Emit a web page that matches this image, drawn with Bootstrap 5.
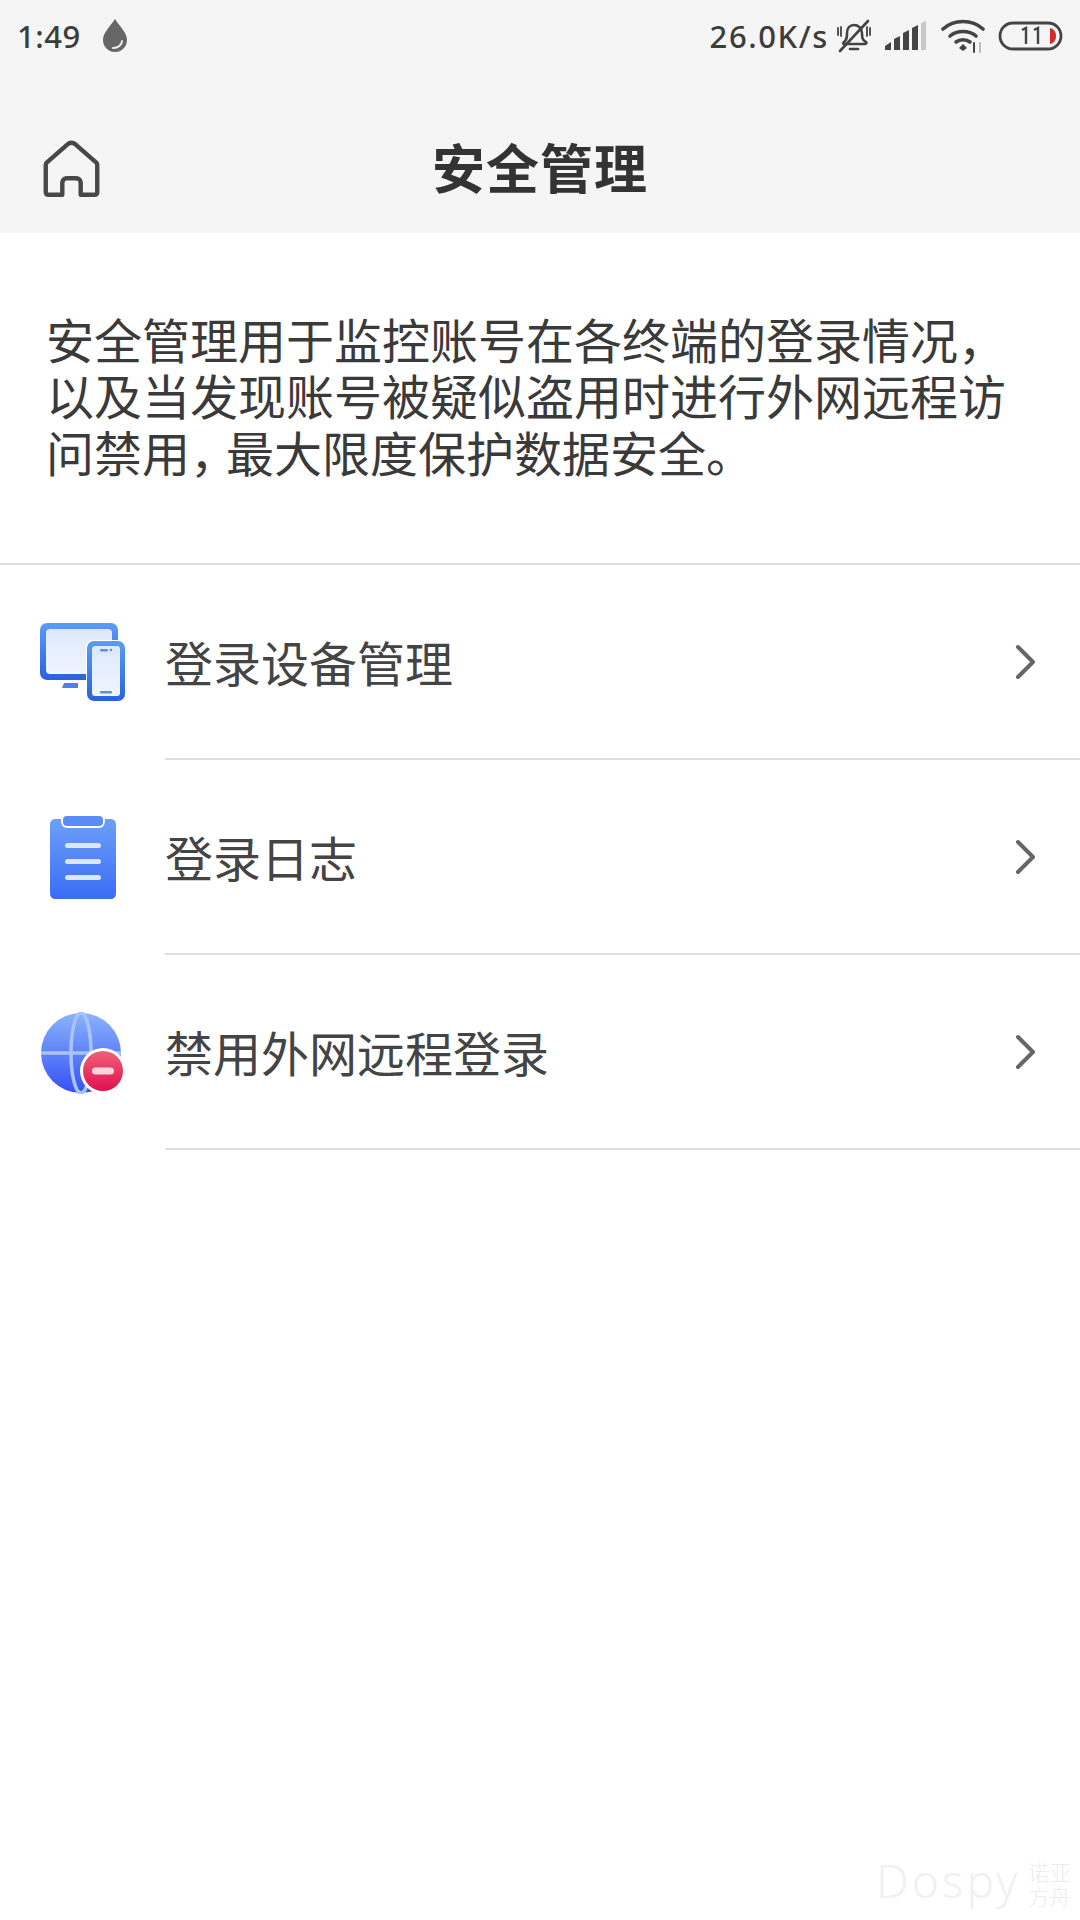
<!DOCTYPE html>
<html lang="zh">
<head>
<meta charset="utf-8">
<title>安全管理</title>
<link href="https://cdn.jsdelivr.net/npm/bootstrap@5.3.0/dist/css/bootstrap.min.css" rel="stylesheet">
<style>
html,body{width:1080px;height:1920px;margin:0;background:#fff;overflow:hidden}
body{font-family:"Noto Sans CJK SC","Noto Sans",sans-serif;color:#333}
.screen{position:relative;width:1080px;height:1920px}
.top-area{background:#f5f5f5;height:233px}
.status-row{height:72px;padding:0 17px 0 17px;color:#3c3c3c}
.clock{font-family:"Noto Sans",sans-serif;font-size:31px;font-weight:500;letter-spacing:.5px;line-height:1}
.drop-ico{margin-left:20px}
.speed{font-family:"Noto Sans",sans-serif;font-size:31px;font-weight:500;letter-spacing:1.6px;line-height:1}
.bell-ico{margin-left:7px}
.sig-ico{margin-left:13px}
.wifi-ico{margin-left:15px}
.bat-ico{margin-left:12px}
.title-row{height:161px;position:relative;padding-top:27px}
.home-btn{position:absolute;left:43px;top:67px;line-height:0}
.page-title{font-size:53px;font-weight:700;line-height:1;color:#333;margin:0;letter-spacing:1px}
.intro{height:332px;padding:82px 30px 0 46px;font-family:"Liberation Sans","Noto Sans CJK SC",sans-serif;font-size:48px;line-height:56.4px;color:#3a3a3a;border-bottom:2px solid #dedede;margin:0}
.nar-comma{font-feature-settings:"halt";margin-right:12px}
.sec-list{border-radius:0;--bs-list-group-border-width:0}
.sec-item{height:195px;padding:0;border:0;background:transparent;color:#444;font-size:48px}
.icon-cell{width:165px;padding-left:40px;line-height:0;flex:none}
.item-body{height:195px;border-bottom:2px solid #dedede;padding-right:42px;line-height:1}
.item-label{padding-bottom:2px}
.mark-text{position:absolute;left:876px;top:1857px;font-family:"Noto Sans",sans-serif;font-weight:300;font-size:46px;color:#f0f0f0;line-height:1;letter-spacing:3px}
.mark-cn{position:absolute;left:1028px;top:1862px;width:44px;font-family:"Liberation Sans","Noto Sans CJK SC",sans-serif;font-size:21.5px;font-weight:300;line-height:24px;color:#ececec}
</style>
</head>
<body>
<div class="screen">
  <div class="top-area">
    <div class="status-row d-flex align-items-center">
      <span class="clock">1:49</span>
      <svg class="drop-ico" width="28" height="36" viewBox="0 0 28 36"><path d="M14 1C10 8 2 14 2 22a12 12 0 0 0 24 0C26 14 18 8 14 1z" fill="#666"/><path d="M12 30c5 0 9-3 9-7" fill="none" stroke="#eee" stroke-width="2" stroke-linecap="round"/></svg>
      <span class="speed ms-auto">26.0K/s</span>
      <svg class="bell-ico" width="36" height="36" viewBox="0 0 36 36" fill="none" stroke="#444" stroke-width="2.6" stroke-linecap="round"><path d="M8 24c3-2 3-5 3-9 0-5 3-8 7-8s8 3 8 8c0 4 0 7 4 9 1 1 0 2-1 2H8c-1 0-1-1 0-2z"/><path d="M14 31h8"/><path d="M4 33 32 3"/><path d="M2 10v7M5 9v9M31 9v9M34 10v7" stroke-width="1.8"/></svg>
      <svg class="sig-ico" width="41" height="30" viewBox="0 0 41 30"><path d="M0 29v-4l6-4v8z" fill="#444"/><path d="M9 29V18l6-3v14z" fill="#444"/><path d="M18 29V12l6-3v20z" fill="#444"/><path d="M27 29V7l6-3v25z" fill="#444"/><path d="M36 29V2l5-2v29z" fill="#c8c8c8"/></svg>
      <svg class="wifi-ico" width="44" height="34" viewBox="0 0 44 34" fill="none" stroke="#444" stroke-width="3.6" stroke-linecap="round"><path d="M2 10c11-10 29-10 40 0"/><path d="M9 17c7-6 19-6 26 0"/><path d="M15 23c4-3 10-3 14 0"/><path d="M22 25l4 4-4 3-4-3z" fill="#444" stroke="none"/><path d="M33 24v9" stroke="#444" stroke-width="2"/><path d="M39 24v9" stroke="#bbb" stroke-width="2"/></svg>
      <svg class="bat-ico" width="66" height="30" viewBox="0 0 66 30"><rect x="3" y="2" width="61" height="26" rx="13" fill="none" stroke="#444" stroke-width="2.8"/><path d="M53 7c4 1 6 4 6 8s-2 7-6 8z" fill="#d32a2a"/><path d="M25 9l4-2v16M37 9l4-2v16" fill="none" stroke="#444" stroke-width="2.4"/></svg>
    </div>
    <div class="title-row d-flex align-items-center justify-content-center">
      <a class="home-btn" href="#" aria-label="首页"><svg width="57" height="60" viewBox="-1 0 62 62" fill="none" stroke="#484848" stroke-width="4.8" stroke-linejoin="round"><path d="M3 24 26 4c2-2 6-2 8 0l23 20c1 1 1 2 1 3v29c0 2-1 3-3 3H40V46c0-3-2-5-5-5H25c-3 0-5 2-5 5v13H5c-2 0-3-1-3-3V27c0-1 0-2 1-3z"/></svg></a>
      <h1 class="page-title">安全管理</h1>
    </div>
  </div>
  <div class="intro">
    <div>安全管理用于监控账号在各终端的登录情况，</div>
    <div>以及当发现账号被疑似盗用时进行外网远程访</div>
    <div>问禁用<span class="nar-comma">，</span>最大限度保护数据安全。</div>
  </div>
  <div class="list-group sec-list">
    <a href="#" class="list-group-item sec-item d-flex align-items-center">
      <span class="icon-cell">
        <svg width="86" height="80" viewBox="0 0 86 80"><defs><linearGradient id="g1" x1="0" y1="0" x2="0" y2="1"><stop offset="0" stop-color="#5a9cf6"/><stop offset="1" stop-color="#2a62dd"/></linearGradient><linearGradient id="g2" x1="0" y1="0" x2="0" y2="1"><stop offset="0" stop-color="#dce9fc"/><stop offset="1" stop-color="#f0f5fe"/></linearGradient></defs>
        <rect x="0" y="0" width="78" height="57" rx="7" fill="url(#g1)"/><rect x="6" y="6" width="66" height="45" rx="4" fill="url(#g2)"/><path d="M24 60h14v5H22z" fill="#4a82e8"/><rect x="46" y="17" width="38" height="62" rx="7" fill="#fff"/><rect x="47" y="18" width="38" height="60" rx="7" fill="url(#g1)"/><rect x="52" y="23" width="28" height="50" rx="3" fill="url(#g2)"/><rect x="60" y="26" width="8" height="2.5" rx="1" fill="#5a8fe8"/><circle cx="71" cy="27" r="1.3" fill="#5a8fe8"/><rect x="60" y="68" width="12" height="2.5" rx="1" fill="#5a8fe8"/></svg>
      </span>
      <span class="item-body flex-grow-1 d-flex align-items-center justify-content-between"><span class="item-label">登录设备管理</span><svg width="24" height="36" viewBox="0 0 24 36" fill="none" stroke="#666" stroke-width="4" stroke-linecap="round" stroke-linejoin="round"><path d="M4 3l15 15L4 33"/></svg></span>
    </a>
    <a href="#" class="list-group-item sec-item d-flex align-items-center">
      <span class="icon-cell">
        <svg width="86" height="84" viewBox="0 0 86 84"><defs><linearGradient id="g3" x1="0" y1="0" x2="0" y2="1"><stop offset="0" stop-color="#6d9ff8"/><stop offset="1" stop-color="#3a6df4"/></linearGradient></defs>
        <path d="M16 3h5v1c0 5 2 8 7 8h30c5 0 7-3 7-8V3h5c4 0 6 2 6 6v68c0 4-2 6-6 6H16c-4 0-6-2-6-6V9c0-4 2-6 6-6z" fill="url(#g3)"/><rect x="23" y="0" width="40" height="10" rx="4" fill="#5a8cf5"/><rect x="25" y="27" width="36" height="5" rx="2.5" fill="#dbe7fd"/><rect x="25" y="43" width="36" height="5" rx="2.5" fill="#dbe7fd"/><rect x="25" y="59" width="36" height="5" rx="2.5" fill="#dbe7fd"/></svg>
      </span>
      <span class="item-body flex-grow-1 d-flex align-items-center justify-content-between"><span class="item-label">登录日志</span><svg width="24" height="36" viewBox="0 0 24 36" fill="none" stroke="#666" stroke-width="4" stroke-linecap="round" stroke-linejoin="round"><path d="M4 3l15 15L4 33"/></svg></span>
    </a>
    <a href="#" class="list-group-item sec-item d-flex align-items-center">
      <span class="icon-cell">
        <svg width="86" height="82" viewBox="0 0 86 82"><defs><linearGradient id="g4" x1="0" y1="0" x2="0" y2="1"><stop offset="0" stop-color="#8ab4fb"/><stop offset="1" stop-color="#3550f4"/></linearGradient><linearGradient id="g5" x1="0" y1="0" x2="0" y2="1"><stop offset="0" stop-color="#f0607a"/><stop offset="1" stop-color="#e0114f"/></linearGradient></defs>
        <circle cx="41" cy="41" r="40" fill="url(#g4)"/><path d="M1 41h80" stroke="#a9c4fb" stroke-width="3.5"/><ellipse cx="41" cy="41" rx="10" ry="40" fill="none" stroke="#a9c4fb" stroke-width="3.5"/>
        <circle cx="63" cy="59" r="23" fill="#fff"/><circle cx="63" cy="59" r="20" fill="url(#g5)"/><rect x="52" y="55.500" width="22" height="7" rx="3.500" fill="#fbd5dc"/></svg>
      </span>
      <span class="item-body flex-grow-1 d-flex align-items-center justify-content-between"><span class="item-label">禁用外网远程登录</span><svg width="24" height="36" viewBox="0 0 24 36" fill="none" stroke="#666" stroke-width="4" stroke-linecap="round" stroke-linejoin="round"><path d="M4 3l15 15L4 33"/></svg></span>
    </a>
  </div>
  <div class="mark-text">Dospy</div>
  <div class="mark-cn">诺亚方舟</div>
</div>
<script src="https://cdn.jsdelivr.net/npm/bootstrap@5.3.0/dist/js/bootstrap.bundle.min.js"></script>
</body>
</html>
